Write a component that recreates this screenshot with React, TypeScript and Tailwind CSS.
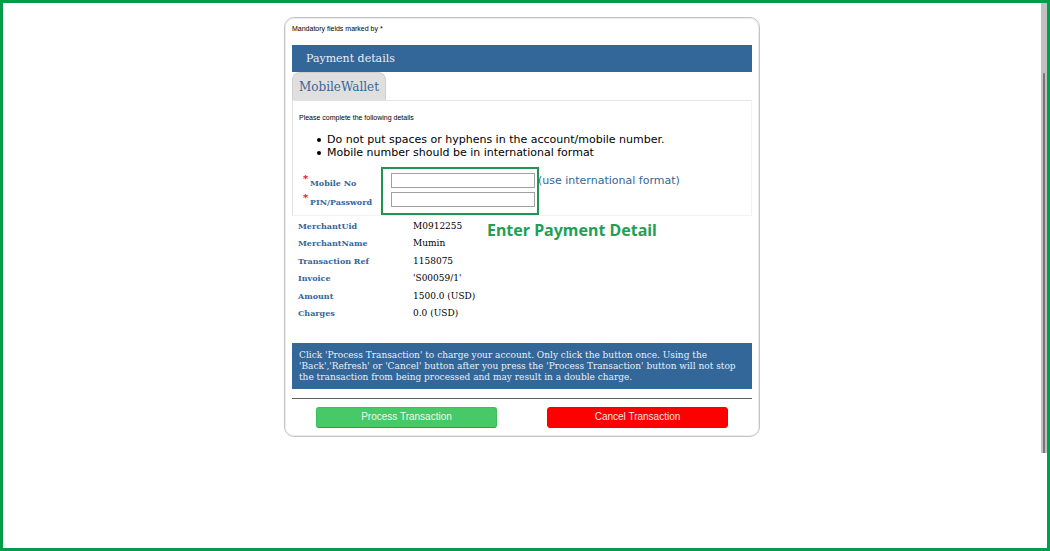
import { useState } from 'react';

const details = [
  ['MerchantUid', 'M0912255'],
  ['MerchantName', 'Mumin'],
  ['Transaction Ref', '1158075'],
  ['Invoice', "'S00059/1'"],
  ['Amount', '1500.0 (USD)'],
  ['Charges', '0.0 (USD)'],
];

const rules = [
  'Do not put spaces or hyphens in the account/mobile number.',
  'Mobile number should be in international format',
];

const serif = "font-['DejaVu_Serif',serif]";
const sans = "font-['DejaVu_Sans',sans-serif]";
const arial = "font-['Liberation_Sans',sans-serif]";

function Field({ id, label, type, value, onChange, hint }: {
  id: string;
  label: string;
  type: string;
  value: string;
  onChange: (value: string) => void;
  hint?: string;
}) {
  return (
    <div className="flex h-[19px] items-start">
      <label htmlFor={id} className={`${serif} flex w-[88px] text-[8px] leading-[20px] font-bold text-[#336699]`}>
        <span className="w-[7px] text-[10px] leading-[11px] text-red-600">*</span>
        <span>{label}</span>
      </label>
      <input
        id={id}
        type={type}
        value={value}
        onChange={(e) => onChange(e.target.value)}
        className={`${arial} h-[15px] w-36 border border-[#a0a0a0] bg-white px-1 text-[10px] outline-none`}
      />
      {hint && <span className={`${sans} pl-[3px] text-[11px] leading-[15px] text-[#336699]`}>{hint}</span>}
    </div>
  );
}

export default function App() {
  const [mobile, setMobile] = useState('');
  const [pin, setPin] = useState('');

  return (
    <div className="flex min-h-screen border-[3px] border-[#049c48] bg-white text-black">
      <main className="flex flex-1 items-start justify-center pt-[14px]">
        <form
          onSubmit={(e) => e.preventDefault()}
          className="w-full max-w-[476px] rounded-[10px] border border-[#c4c4c4] px-[7px] pb-2 shadow-[inset_0_0_0_1px_#ececec]"
        >
          <p className={`${arial} pt-[6px] text-[7px] leading-[10px]`}>Mandatory fields marked by *</p>
          <h1 className={`${serif} mt-[11px] bg-[#336699] px-[14px] pt-px text-[11px] leading-[26px] text-[#e9f0f7]`}>
            Payment details
          </h1>
          <div role="tablist" className="flex">
            <button
              type="button"
              role="tab"
              aria-selected="true"
              className={`${serif} h-7 rounded-t-lg border border-b-0 border-[#d0d0d0] bg-[#dfdfdf] px-[6px] text-[12px] text-[#336699]`}
            >
              MobileWallet
            </button>
          </div>

          <section className="border border-[#e4e4e4] border-r-[#f2f2f2] border-b-[#f2f2f2] pt-3 pb-1">
            <p className={`${arial} px-[6px] text-[7px] leading-[10px]`}>Please complete the following details</p>
            <ul className={`${sans} mt-[10px] pl-6 text-[11px] leading-[13px]`}>
              {rules.map((rule) => (
                <li key={rule} className="flex items-center gap-[6px] before:size-1 before:rounded-full before:bg-black">
                  {rule}
                </li>
              ))}
            </ul>
            <div className="relative mt-[13px] pt-px pl-[10px]">
              <Field id="mobile" label="Mobile No" type="text" value={mobile} onChange={setMobile} hint="(use international format)" />
              <Field id="pin" label="PIN/Password" type="password" value={pin} onChange={setPin} />
              <div className="pointer-events-none absolute -top-[5px] left-[88px] h-12 w-[158px] border-2 border-[#209455]" />
              <strong className="pointer-events-none absolute top-[46px] left-[194px] font-['Noto_Sans',sans-serif] text-[16px] leading-6 font-bold whitespace-nowrap text-[#1fa055]">
                Enter Payment Detail
              </strong>
            </div>
          </section>

          <table className={`${serif} mt-px h-[105px] w-full text-left`}>
            <tbody>
              {details.map(([name, value]) => (
                <tr key={name}>
                  <th scope="row" className="w-[121px] p-0 pl-[6px] text-[8px] leading-[16px] font-bold text-[#336699]">{name}</th>
                  <td className="p-0 text-[9px] leading-[16px]">{value}</td>
                </tr>
              ))}
            </tbody>
          </table>

          <p className={`${serif} mt-[21px] bg-[#336699] px-[7px] pt-[7px] pb-[6px] text-[9px] leading-[11px] text-[#e9f0f7]`}>
            Click 'Process Transaction' to charge your account. Only click the button once. Using the
            'Back','Refresh' or 'Cancel' button after you press the 'Process Transaction' button will not stop
            the transaction from being processed and may result in a double charge.
          </p>
          <hr className="mt-[9px] border-t border-[#606060]" />
          <div className="mt-2 flex justify-between px-6">
            <button type="submit" className={`${arial} h-[21px] w-[181px] rounded-[3px] border border-[#3cbc5c] border-b-[#28a045] bg-[#46c966] pb-[2px] text-[10px] leading-[17px] text-[#effaf1]`}>
              Process Transaction
            </button>
            <button type="button" className={`${arial} h-[21px] w-[181px] rounded-[3px] border border-[#f40000] bg-[#ff0000] pb-[2px] text-[10px] leading-[17px] text-[#ffe5e5]`}>
              Cancel Transaction
            </button>
          </div>
        </form>
      </main>
      <div aria-hidden="true" className="flex h-[450px] w-[6px] justify-center bg-[#c1c1c1] pt-[70px]">
        <div className="w-[2px] rounded-t bg-[#777777]" />
      </div>
    </div>
  );
}
